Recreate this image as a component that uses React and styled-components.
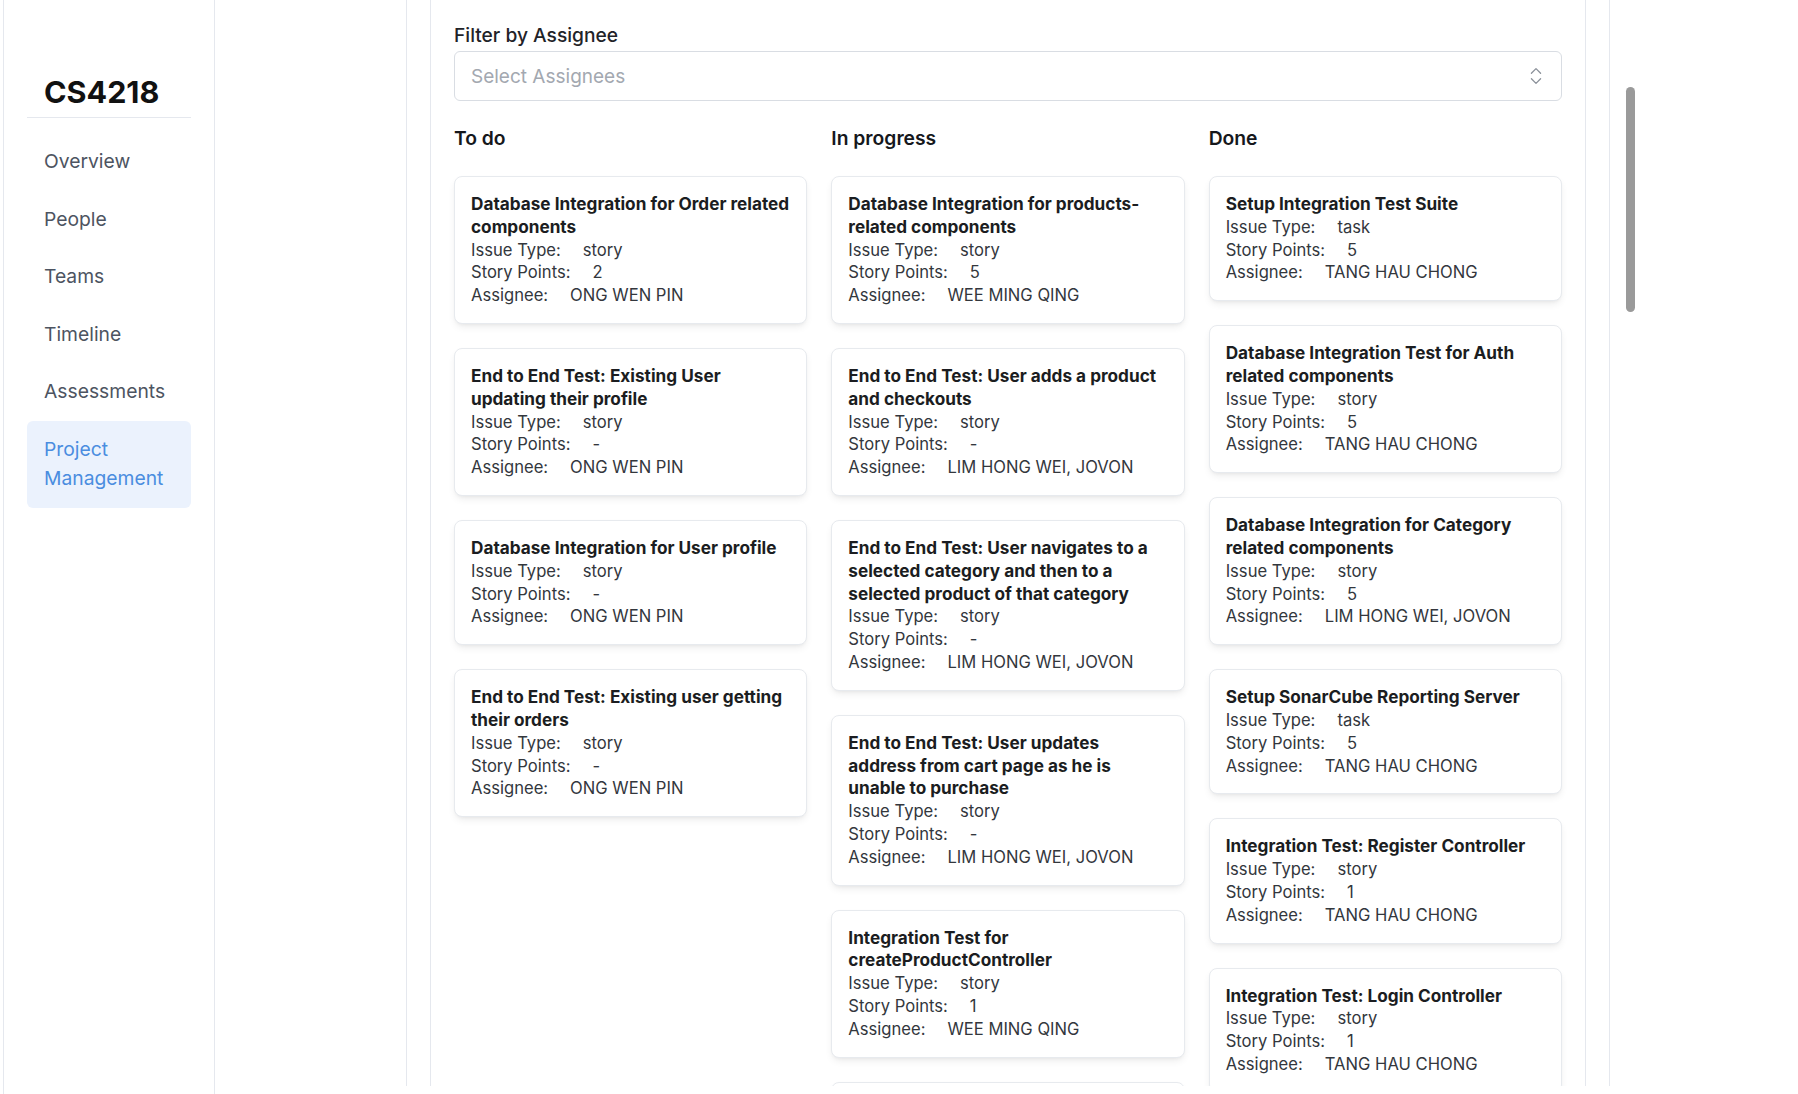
import React from 'react'
import styled, { createGlobalStyle } from 'styled-components'
import { ChevronsUpDown } from 'lucide-react'

const GlobalStyle = createGlobalStyle`
    html, body {
        margin: 0;
        padding: 0;
        background: #ffffff;
        font-family: Inter, "Noto Sans", sans-serif;
        color: #1f2328;
    }
    * { box-sizing: border-box; }
`

const Page = styled.div`
    display: flex;
    height: 1094px;
    padding-left: 3px;
    overflow: hidden;
`

const SideBar = styled.aside`
    width: 212px;
    flex-shrink: 0;
    border-left: 1px solid #e5e8ee;
    border-right: 1px solid #e5e8ee;
    padding: 74px 23px 0;
`

const Brand = styled.h1`
    margin: 0;
    padding: 0 0 7px 17px;
    font-size: 30.5px;
    line-height: 36px;
    font-weight: 700;
    color: #111111;
    border-bottom: 1px solid #e5e8ee;
`

const NavList = styled.ul`
    list-style: none;
    margin: 15px 0 0;
    padding: 0;
`

const NavItem = styled.li`
    padding: 14px 17px;
    font-size: 19.3px;
    line-height: 29.5px;
    border-radius: 6px;
    color: ${p => (p.$active ? '#4a8de0' : '#4d5461')};
    background: ${p => (p.$active ? '#ebf2fd' : 'transparent')};
`

const Spacer = styled.div`
    width: 191px;
    flex-shrink: 0;
`

const Main = styled.main`
    width: 1204px;
    flex-shrink: 0;
    height: 1086px;
    border-left: 1px solid #e5e8ee;
    border-right: 1px solid #e5e8ee;
    padding: 0 23px;
    overflow: hidden;
`

const Panel = styled.section`
    height: 100%;
    border-left: 1px solid #e5e8ee;
    border-right: 1px solid #e5e8ee;
    padding: 23px 23px 0;
`

const FilterLabel = styled.label`
    display: block;
    font-size: 19.2px;
    line-height: 25px;
    font-weight: 500;
    color: #1f2328;
    margin-bottom: 3px;
`

const Select = styled.div`
    height: 50px;
    border: 1px solid #d9dde3;
    border-radius: 6px;
    display: flex;
    align-items: center;
    justify-content: space-between;
    padding: 0 14px 0 16px;
    font-size: 19px;
    color: #a3a8b0;
`

const Board = styled.div`
    display: grid;
    grid-template-columns: repeat(3, 1fr);
    column-gap: 24px;
    margin-top: 23px;
`

const Column = styled.div`
    display: flex;
    flex-direction: column;
    gap: 24px;
`

const ColumnTitle = styled.h2`
    margin: 0;
    font-size: 19.3px;
    line-height: 28px;
    font-weight: 600;
    color: #16181c;
`

const Card = styled.div`
    border: 1px solid #e7eaee;
    border-radius: 8px;
    padding: 16px;
    background: #fff;
    box-shadow: 0 4px 8px -2px rgba(0, 0, 0, 0.09), 0 2px 4px -2px rgba(0, 0, 0, 0.06);
    font-size: 16.6px;
    line-height: 22.8px;
    color: #33373d;
`

const CardTitle = styled.div`
    font-size: 17.2px;
    font-weight: 650;
    color: #1b1d21;
`

const Field = styled.div`
    display: flex;
    gap: 22px;
`

const Rail = styled.div`
    flex: 1;
    padding: 87px 0 0 16px;
`

const Thumb = styled.div`
    width: 9px;
    height: 225px;
    border-radius: 5px;
    background: #9a9a9a;
`

const nav = ['Overview', 'People', 'Teams', 'Timeline', 'Assessments']

const columns = [
    {
        title: 'To do',
        cards: [
            ['Database Integration for Order related components', 'story', '2', 'ONG WEN PIN'],
            ['End to End Test: Existing User updating their profile', 'story', '-', 'ONG WEN PIN'],
            ['Database Integration for User profile', 'story', '-', 'ONG WEN PIN'],
            ['End to End Test: Existing user getting their orders', 'story', '-', 'ONG WEN PIN'],
        ],
    },
    {
        title: 'In progress',
        cards: [
            ['Database Integration for products-related components', 'story', '5', 'WEE MING QING'],
            ['End to End Test: User adds a product and checkouts', 'story', '-', 'LIM HONG WEI, JOVON'],
            ['End to End Test: User navigates to a selected category and then to a selected product of that category', 'story', '-', 'LIM HONG WEI, JOVON'],
            ['End to End Test: User updates address from cart page as he is unable to purchase', 'story', '-', 'LIM HONG WEI, JOVON'],
            ['Integration Test for createProductController', 'story', '1', 'WEE MING QING'],
            ['Integration Test for updateProductController', 'story', '1', 'WEE MING QING'],
        ],
    },
    {
        title: 'Done',
        cards: [
            ['Setup Integration Test Suite', 'task', '5', 'TANG HAU CHONG'],
            ['Database Integration Test for Auth related components', 'story', '5', 'TANG HAU CHONG'],
            ['Database Integration for Category related components', 'story', '5', 'LIM HONG WEI, JOVON'],
            ['Setup SonarCube Reporting Server', 'task', '5', 'TANG HAU CHONG'],
            ['Integration Test: Register Controller', 'story', '1', 'TANG HAU CHONG'],
            ['Integration Test: Login Controller', 'story', '1', 'TANG HAU CHONG'],
        ],
    },
]

function IssueCard({ title, type, points, assignee }) {
    return (
        <Card>
            <CardTitle>{title}</CardTitle>
            <Field><span>Issue Type:</span><span>{type}</span></Field>
            <Field><span>Story Points:</span><span>{points}</span></Field>
            <Field><span>Assignee:</span><span>{assignee}</span></Field>
        </Card>
    )
}

export default function App() {
    return (
        <Page>
            <GlobalStyle />
            <SideBar>
                <Brand>CS4218</Brand>
                <NavList>
                    {nav.map(n => <NavItem key={n}>{n}</NavItem>)}
                    <NavItem $active>Project<br />Management</NavItem>
                </NavList>
            </SideBar>
            <Spacer />
            <Main>
                <Panel>
                    <FilterLabel>Filter by Assignee</FilterLabel>
                    <Select>
                        <span>Select Assignees</span>
                        <ChevronsUpDown size={22} strokeWidth={1.4} color="#8a9099" />
                    </Select>
                    <Board>
                        {columns.map(col => (
                            <Column key={col.title}>
                                <ColumnTitle>{col.title}</ColumnTitle>
                                {col.cards.map(c => (
                                    <IssueCard key={c[0]} title={c[0]} type={c[1]} points={c[2]} assignee={c[3]} />
                                ))}
                            </Column>
                        ))}
                    </Board>
                </Panel>
            </Main>
            <Rail>
                <Thumb />
            </Rail>
        </Page>
    )
}
